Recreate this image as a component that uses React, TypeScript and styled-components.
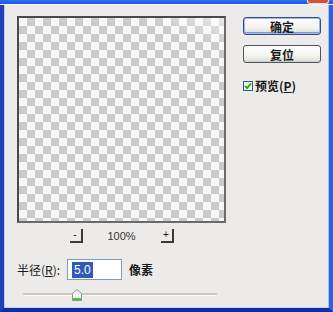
import React from "react";
import styled, { createGlobalStyle } from "styled-components";

const Global = createGlobalStyle`
  html, body { margin: 0; padding: 0; background: #ecebe9; }
  body { width: 333px; height: 312px; overflow: hidden; }
`;

const CJK = `"Noto Sans CJK SC", "Liberation Sans", sans-serif`;

const Frame = styled.div`
  box-sizing: border-box;
  width: 333px;
  height: 312px;
  display: flex;
  flex-direction: column;
  background: #ecebe9;
  border-left: 4px solid #1d3fc0;
  border-right: 4px solid #2f63dc;
  border-bottom: 4px solid #0c2fa8;
  box-shadow: inset 1px 0 0 #b9c9f0, inset -1px 0 0 #a9bef0, inset 0 -1px 0 #c4d3f6;
`;

const TitleBar = styled.div`
  height: 4px;
  margin: 0 -4px;
  display: flex;
  justify-content: flex-end;
  padding-right: 4px;
  background: linear-gradient(to bottom, #2e6ef0, #1858e2);
  border-bottom: 1px solid #f4f6fb;
`;

const CloseEdge = styled.div`
  width: 20px;
  height: 3px;
  background: #d7512e;
  border: 1px solid #f0e0e0;
  border-top: none;
  border-radius: 0 0 3px 3px;
`;

const Content = styled.div`
  flex: 1;
  display: flex;
  flex-direction: column;
  padding: 11px 0 0 13px;
`;

const TopRow = styled.div`
  display: flex;
  align-items: flex-start;
`;

const LeftCol = styled.div`
  display: flex;
  flex-direction: column;
  width: 209px;
`;

const Preview = styled.div`
  box-sizing: border-box;
  width: 209px;
  height: 207px;
  border: 2px solid #6b6b6b;
  border-top-color: #4a4a4a;
  border-left-color: #4a4a4a;
  background:
    linear-gradient(200deg, rgba(255,255,255,0.55), rgba(255,255,255,0) 30px),
    conic-gradient(#cacaca 25%, #f7f7f7 0 50%, #cacaca 0 75%, #f7f7f7 0) 0 0 / 16px 16px;
`;

const ZoomRow = styled.div`
  display: flex;
  align-items: center;
  justify-content: center;
  gap: 25px;
  margin-top: 6px;
  height: 14px;
`;

const ZoomBtn = styled.div`
  box-sizing: border-box;
  width: 13px;
  height: 14px;
  border-right: 2px solid #3a3a3a;
  border-bottom: 2px solid #3a3a3a;
  display: flex;
  align-items: center;
  justify-content: center;
  font: 10px "Liberation Sans", sans-serif;
  color: #222;
  line-height: 1;
`;

const ZoomText = styled.span`
  font: 11px "Liberation Sans", sans-serif;
  color: #333;
  width: 28px;
  text-align: center;
`;

const Sidebar = styled.div`
  display: flex;
  flex-direction: column;
  margin-left: 17px;
  margin-top: 1px;
  width: 78px;
`;

const Button = styled.div<{ $default?: boolean }>`
  box-sizing: border-box;
  height: 18px;
  border: 1px solid ${(p) => (p.$default ? "#2f4f8a" : "#4a5664")};
  border-radius: 3px;
  background: linear-gradient(to bottom, #ffffff, #f3f3ef 60%, #dcdcd6);
  box-shadow: ${(p) =>
    p.$default
      ? "inset 0 0 0 1px #9fb6e6, inset 0 -1px 0 1px #7e9ad6"
      : "inset 0 -1px 0 #cfcfc8"};
  display: flex;
  align-items: center;
  justify-content: center;
  font: 600 12px ${CJK};
  color: #1a1a1a;
  & + & { margin-top: 10px; }
`;

const CheckRow = styled.label`
  display: flex;
  align-items: center;
  gap: 2px;
  margin-top: 14px;
  font: 600 12px ${CJK};
  color: #1a1a1a;
`;

const CheckBox = styled.span`
  box-sizing: border-box;
  width: 10px;
  height: 10px;
  border: 1px solid #2a5a86;
  background: #eef4e6;
  display: flex;
  align-items: center;
  justify-content: center;
`;

const U = styled.span`
  text-decoration: underline;
`;

const RadiusRow = styled.div`
  display: flex;
  align-items: center;
  margin-top: 16px;
  height: 21px;
  font: 12px ${CJK};
  color: #1a1a1a;
`;

const Label = styled.span`
  width: 50px;
`;

const Input = styled.div`
  box-sizing: border-box;
  width: 55px;
  height: 21px;
  border: 1px solid #7f9db9;
  background: #fff;
  display: flex;
  align-items: center;
  padding-left: 4px;
`;

const Selected = styled.span`
  background: #2f5bb8;
  color: #fff;
  font: 12px "Liberation Sans", sans-serif;
  padding: 1px 2px;
  line-height: 14px;
`;

const Unit = styled.span`
  margin-left: 7px;
  font-weight: 600;
`;

const SliderRow = styled.div`
  position: relative;
  margin-top: 9px;
  margin-left: 6px;
  width: 194px;
  height: 12px;
`;

const Track = styled.div`
  position: absolute;
  left: 0;
  right: 0;
  top: 4px;
  height: 2px;
  border-radius: 1px;
  background: #c8c6c0;
  border-bottom: 1px solid #fafafa;
`;

const Thumb = styled.svg`
  position: absolute;
  left: 49px;
  top: 0;
`;

export default function App() {
  return (
    <>
      <Global />
      <Frame>
        <TitleBar>
          <CloseEdge />
        </TitleBar>
        <Content>
          <TopRow>
            <LeftCol>
              <Preview />
              <ZoomRow>
                <ZoomBtn>-</ZoomBtn>
                <ZoomText>100%</ZoomText>
                <ZoomBtn>+</ZoomBtn>
              </ZoomRow>
            </LeftCol>
            <Sidebar>
              <Button $default>确定</Button>
              <Button>复位</Button>
              <CheckRow>
                <CheckBox>
                  <svg width="8" height="8" viewBox="0 0 8 8">
                    <path d="M1 4 L3 6.2 L7 1.5" fill="none" stroke="#21a121" strokeWidth="1.8" />
                  </svg>
                </CheckBox>
                <span>
                  预览(<U>P</U>)
                </span>
              </CheckRow>
            </Sidebar>
          </TopRow>
          <RadiusRow>
            <Label>
              半径(<U>R</U>):
            </Label>
            <Input>
              <Selected>5.0</Selected>
            </Input>
            <Unit>像素</Unit>
          </RadiusRow>
          <SliderRow>
            <Track />
            <Thumb width="10" height="12" viewBox="0 0 10 12">
              <path d="M0.5 4.5 L5 0.5 L9.5 4.5 L9.5 11.5 L0.5 11.5 Z" fill="#f8f8f6" stroke="#8a9498" />
              <rect x="1" y="9" width="8" height="2.5" fill="#4fc44a" />
            </Thumb>
          </SliderRow>
        </Content>
      </Frame>
    </>
  );
}
